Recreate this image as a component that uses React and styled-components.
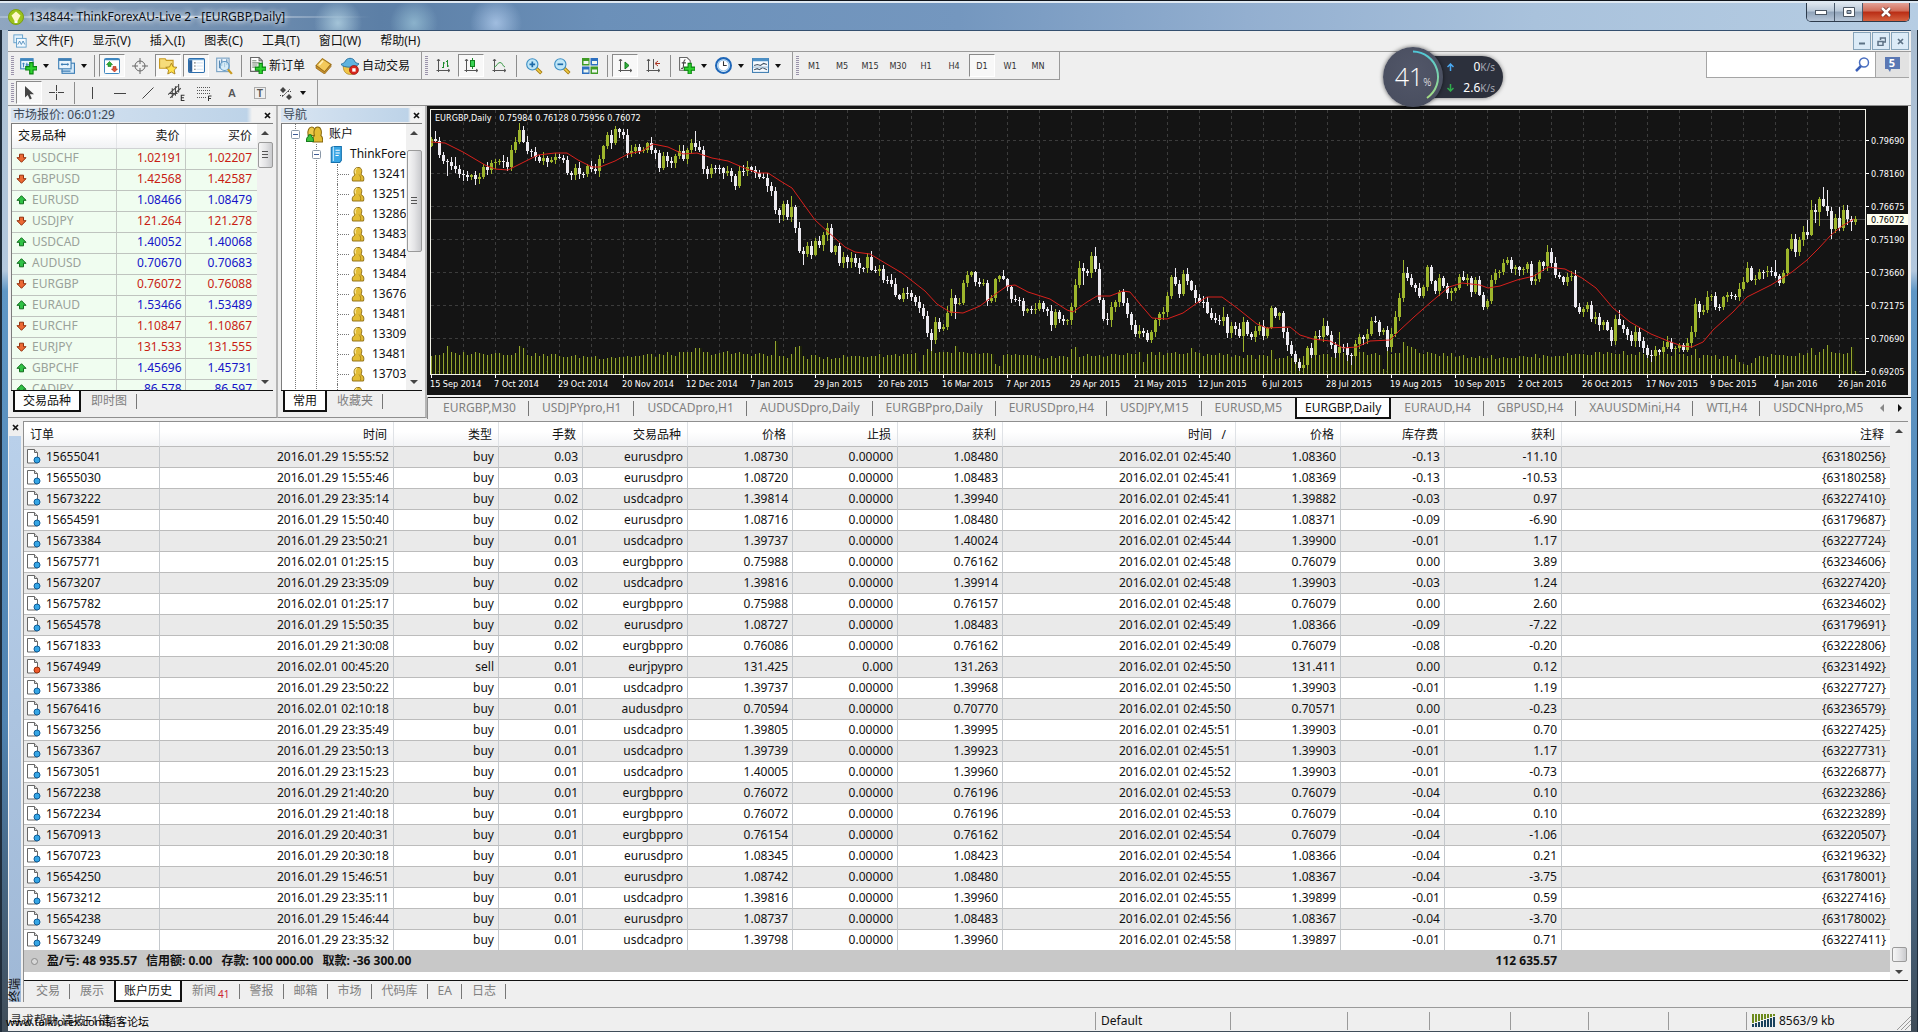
import React, { useState } from 'react';
import styled, { createGlobalStyle, css } from 'styled-components';

const GlobalStyle = createGlobalStyle`
    * {
        box-sizing: border-box;
    }
    body {
        margin: 0;
        font-family: "Noto Sans", "Noto Sans CJK SC", sans-serif;
        font-size: 12px;
        line-height: 16px;
        color: #111;
        background: #efefef;
    }
    button, input {
        font: inherit;
        color: inherit;
        margin: 0;
        padding: 0;
        border: 0;
        background: none;
        border-radius: 0;
    }
`;

/* ---------- window ---------- */

const Window = styled.div`
    position: relative;
    min-height: 100vh;
    display: flex;
    flex-direction: column;
    padding: 0 7px 1px 8px;
    border-top: 1px solid #10151c;
    background: linear-gradient(180deg, #a9bccf 0, #b3c8de 270px, #5f97c6 290px, #4f83b1 70%, #3f4c58 100%);
    box-shadow: inset 2px 0 0 #1f2c3a, inset -1px 0 0 #1f2c3a;
`;

const TitleBar = styled.header`
    display: flex;
    align-items: center;
    height: 29px;
    margin: 0 -7px 0 -8px;
    padding: 0 8px;
    border-top: 2px solid #dfe9f2;
    background:
        radial-gradient(circle at 338px 20px, rgba(180, 212, 228, .8), transparent 24px),
        radial-gradient(circle at 414px 20px, rgba(150, 190, 212, .8), transparent 24px),
        radial-gradient(circle at 496px 20px, rgba(175, 202, 235, .8), transparent 26px),
        radial-gradient(ellipse at 150px 14px, rgba(235, 240, 246, .85), rgba(220, 228, 238, .5) 130px, transparent 230px),
        linear-gradient(90deg, #8fa6c0 0, #5c7fa6 380px, #6b90b9 600px, #7497bf 50%, #93afd0 65%, #a9c2dc 80%, #b6cde3 100%);
`;

const TitleText = styled.h1`
    margin: 0 auto 0 5px;
    font-size: 12px;
    font-weight: 400;
    color: #0a0f16;
    text-shadow: 0 0 6px #fff, 0 0 6px #fff;
`;

const WindowButtons = styled.div`
    display: flex;
    align-self: flex-start;
    height: 19px;
    border: 1px solid #2d3b4c;
    border-top: 0;
    border-radius: 0 0 5px 5px;
    overflow: hidden;
`;

const WindowButton = styled.button`
    display: flex;
    align-items: center;
    justify-content: center;
    width: ${p => (p.$close ? 46 : 28)}px;
    border-right: ${p => (p.$close ? 0 : '1px solid #4a5a6c')};
    background: ${p => (p.$close
        ? 'linear-gradient(#e3a196 0, #d06c58 45%, #b92c14 50%, #d5613f 100%)'
        : 'linear-gradient(#dde6ef 0, #b9c8d8 45%, #8fa2b8 50%, #b6c6d8 100%)')};
`;

const Client = styled.main`
    flex: 1;
    display: flex;
    flex-direction: column;
    border-top: 1px solid #34506f;
    background: #efefef;
`;

/* ---------- menu and toolbars ---------- */

const MenuBar = styled.nav`
    display: flex;
    align-items: center;
    gap: 19px;
    height: 21px;
    padding: 0 2px 0 5px;
    border-bottom: 1px solid #9a9a9a;
`;

const MenuItems = styled.div`
    display: flex;
    gap: 19px;
    margin-left: -10px;
`;

const MdiButtons = styled.div`
    display: flex;
    gap: 1px;
    margin-left: auto;
`;

const MdiButton = styled.button`
    display: flex;
    align-items: center;
    justify-content: center;
    width: 18px;
    height: 18px;
    border: 1px solid #86a3b9;
    background: #dcebf7;
`;

const ToolRow = styled.div`
    display: flex;
    align-items: flex-start;
    height: ${p => p.$height}px;
`;

const ToolGroup = styled.div`
    display: flex;
    align-items: center;
    height: 28px;
    padding: 0 6px 0 3px;
    border-right: 1px solid #9a9a9a;
    border-bottom: ${p => (p.$last ? 0 : '1px solid #9a9a9a')};
    ${p => p.$last && css`height: 25px;`}
`;

const Grip = styled.span`
    width: 3px;
    height: 20px;
    margin-right: 2px;
    background: repeating-linear-gradient(#9b94ab 0 1px, #efefef 1px 2px);
`;

const ToolSep = styled.span`
    width: 1px;
    height: 22px;
    margin: 0 4px 0 2px;
    background: #8d8d8d;
`;

const ToolButton = styled.button`
    display: flex;
    align-items: center;
    justify-content: center;
    gap: 3px;
    height: 23px;
    min-width: 26px;
    margin-right: 2px;
    padding: 0 2px;
    border: 1px solid transparent;
    white-space: nowrap;
    ${p => p.$on && css`
        border-color: #8a8a8a #fff #fff #8a8a8a;
        background: #f8f8f8;
    `}
`;

const TimeButton = styled(ToolButton)`
    font-family: "DejaVu Sans Condensed", "DejaVu Sans", sans-serif;
    font-size: 9px;
    color: #333;
`;

const Caret = styled.span`
    margin-left: 3px;
    border: 3px solid transparent;
    border-top: 4px solid #111;
    border-bottom: 0;
`;

const SearchArea = styled.div`
    display: flex;
    margin-left: auto;
    margin-right: 2px;
    height: 26px;
    border-bottom: 1px solid #a5a5a5;
`;

const SearchBox = styled.label`
    display: flex;
    align-items: center;
    width: 170px;
    padding-right: 5px;
    background: #fff;
    border: 1px solid #a5a5a5;
    border-width: 0 1px;

    input {
        flex: 1;
        min-width: 0;
        height: 22px;
        padding: 0 6px;
        outline: 0;
    }
`;

const MessageButton = styled.button`
    display: flex;
    align-items: center;
    justify-content: center;
    width: 33px;
    background: #e2e2e2;
`;

/* ---------- network gauge floating over the toolbar ---------- */

const Gauge = styled.aside`
    position: absolute;
    top: 46px;
    right: 415px;
    display: flex;
    align-items: center;
    color: #fff;
`;

const GaugeDial = styled.div`
    position: relative;
    z-index: 1;
    display: flex;
    align-items: baseline;
    justify-content: center;
    width: 60px;
    height: 60px;
    border-radius: 50%;
    background: radial-gradient(circle at 50% 40%, #525769, #474c5d);
    box-shadow: 0 0 4px rgba(0, 0, 0, .6);
    font-family: "Open Sans", sans-serif;
    font-weight: 300;
    font-size: 25px;
    line-height: 58px;

    small {
        font-size: 10px;
    }
    svg {
        position: absolute;
        inset: 0;
    }
`;

const GaugeSpeeds = styled.div`
    width: 76px;
    height: 42px;
    margin-left: -16px;
    padding: 0 8px 0 20px;
    border-radius: 0 21px 21px 0;
    background: #2c303c;
    box-shadow: 0 0 4px rgba(0, 0, 0, .5);
`;

const Speed = styled.div`
    display: flex;
    align-items: center;
    height: 21px;

    span {
        margin-left: auto;
    }
    small {
        font-size: 10px;
        color: #a4a8b4;
    }
`;

/* ---------- docked panels ---------- */

const Upper = styled.section`
    display: grid;
    grid-template-columns: 270px 149px minmax(0, 1fr);
    height: 315px;
    border-top: 1px solid #8f8f8f;
`;

const Dock = styled.section`
    display: flex;
    flex-direction: column;
    min-width: 0;
    height: 312px;
    padding: 2px 3px 5px 3px;
    border-right: 2px solid #b5b5b5;
    border-bottom: 1px solid #8f8f8f;
`;

const DockHead = styled.header`
    display: flex;
    align-items: center;
    justify-content: space-between;
    height: 14px;
    margin-bottom: 1px;
    padding: 0 2px;
    color: #3b4856;
    background: linear-gradient(90deg, #d9e5f2, #bdd3e8 90%, #f2f2f2 92%);

    h2 {
        margin: 0;
        font-size: 12px;
        line-height: 14px;
        font-weight: 400;
    }
`;

const CloseMark = styled.button`
    display: flex;
    align-items: center;
    justify-content: center;
    width: 8px;
    height: 12px;
`;

const DockBody = styled.div`
    flex: 1;
    display: flex;
    min-height: 0;
    overflow: hidden;
    border: 1px solid #7d7d7d;
    border-width: 1px 0 0 1px;
    background: #fff;
`;

const Scroll = styled.div`
    display: flex;
    flex-direction: column;
    align-items: center;
    width: ${p => p.$width || 16}px;
    flex: none;
    padding: 7px 0 6px;
    background: #f0f0f0;
`;

const Thumb = styled.div`
    width: 15px;
    height: ${p => p.$height}px;
    margin-top: ${p => p.$top}px;
    margin-bottom: auto;
    border: 1px solid #9a9a9a;
    border-radius: 2px;
    display: flex;
    flex-direction: column;
    align-items: center;
    justify-content: center;
    background: linear-gradient(90deg, #f6f6f6, #e4e4e6 50%, #c9cacd);

    &::before {
        content: "";
        width: 6px;
        height: ${p => (p.$grip ? 8 : 0)}px;
        background: repeating-linear-gradient(#555 0 1px, transparent 1px 3px);
    }
`;

const ScrollArrow = styled.span`
    border: 4px solid transparent;
    ${p => (p.$down
        ? css`border-top: 4px solid #444; border-bottom: 0;`
        : css`border-bottom: 4px solid #444; border-top: 0;`)}
`;

const QuoteTable = styled.table`
    flex: 1;
    align-self: flex-start;
    table-layout: fixed;
    border-collapse: collapse;

    th {
        height: 24px;
        padding: 0 5px 0 6px;
        border-right: 1px solid #e2e4e6;
        border-bottom: 1px solid #d0d2d4;
        background: linear-gradient(#fff 40%, #f1f2f4);
        font-weight: 400;
        text-align: right;
    }
    td {
        height: 21px;
        padding: 0 3px 2px 4px;
        border-right: 1px solid #c3c8c3;
        border-bottom: 1px solid #bfc4bf;
        background: #f0fdf0;
        text-align: right;
        line-height: 16px;
    }
    th:first-child, td:first-child {
        text-align: left;
    }
    th:last-child, td:last-child {
        border-right: 0;
        padding-right: 5px;
    }
`;

const Symbol = styled.span`
    display: flex;
    align-items: center;
    gap: 5px;
    color: #9aa29a;
`;

const Price = styled.span`
    color: ${p => (p.$up ? '#1414c8' : '#c81e14')};
`;

const TabStrip = styled.div`
    display: flex;
    height: ${p => p.$height || 22}px;
    padding-left: ${p => p.$pad || 0}px;
    border-top: 1px solid #111;
    white-space: nowrap;
    overflow: hidden;
`;

const Tab = styled.button`
    position: relative;
    display: flex;
    align-items: center;
    flex: none;
    height: 21px;
    padding: 0 ${p => (p.$loose ? 13 : 10)}px 1px;
    color: #808080;

    &::after {
        content: "";
        position: absolute;
        right: 0;
        top: 3px;
        width: 1px;
        height: 15px;
        background: #777;
    }
    ${p => p.$beforeActive && css`
        &::after { display: none; }
    `}
    ${p => p.$active && css`
        padding: 0 8px;
        border: 1px solid #111;
        border-width: 0 2px 2px;
        background: #fff;
        color: #111;
        &::after { display: none; }
    `}
    sub {
        margin: 6px 0 0 2px;
        font-size: 10px;
        line-height: 10px;
        color: #cc2233;
    }
`;

const Tree = styled.ul`
    flex: 1;
    min-width: 0;
    margin: 0;
    padding: 0;
    list-style: none;
    overflow: hidden;
`;

const TreeRow = styled.li`
    display: flex;
    align-items: center;
    height: 20px;
    white-space: nowrap;
    padding-left: ${p => p.$pad}px;
    gap: 6px;
    background-image:
        linear-gradient(transparent 50%, #fff 50%),
        linear-gradient(90deg, #777 1px, transparent 1px),
        linear-gradient(transparent 50%, #fff 50%),
        linear-gradient(90deg, #777 1px, transparent 1px);
    background-size: 1px 2px, 1px 20px, 1px 2px, 1px 20px;
    background-repeat: repeat-y;
    background-position: 13px 0, 13px 0, ${p => (p.$level > 0 ? '34px 0, 34px 0' : '-9px 0, -9px 0')};
`;

const Branch = styled.span`
    width: 12px;
    height: 20px;
    margin-right: -5px;
    flex: none;
    border-left: 1px dotted #777;
    background: repeating-linear-gradient(90deg, #777 0 1px, transparent 1px 2px) 0 50% / 12px 1px no-repeat;
`;

const ChartPanel = styled.section`
    display: flex;
    flex-direction: column;
    min-width: 0;
`;

const ChartSvg = styled.svg`
    display: block;
    width: calc(100% - 3px);
    height: 289px;
    background: #141414;
    font-family: "DejaVu Sans Condensed", "DejaVu Sans", sans-serif;
    font-size: 9px;
    fill: #fff;
`;

const ChartTabs = styled.div`
    display: flex;
    align-items: stretch;
    margin-top: 2px;
    border-left: 1px solid #8f8f8f;

    > div:first-child {
        flex: 1;
        min-width: 0;
    }
`;

const ChartTabArrows = styled.div`
    display: flex;
    align-items: center;
    gap: 14px;
    padding: 0 8px 2px;
    border-top: 1px solid #111;
`;

/* ---------- terminal ---------- */

const Terminal = styled.section`
    display: grid;
    grid-template-columns: 15px minmax(0, 1fr);
    padding: 1px 3px 5px 0;
    border-bottom: 1px solid #9a9a9a;
`;

const TerminalSide = styled.div`
    display: flex;
    flex-direction: column;
    align-items: center;
    padding: 0 2px 0 1px;
`;

const TerminalLabel = styled.h2`
    flex: 1;
    display: flex;
    align-items: center;
    width: 12px;
    margin: 3px 0 0;
    writing-mode: vertical-rl;
    text-orientation: sideways;
    transform: rotate(180deg);
    font-size: 12px;
    line-height: 12px;
    font-weight: 400;
    background: linear-gradient(#9fb8d6, #b9d0ea);
`;

const TerminalMain = styled.div`
    border-left: 1px solid #8f8f8f;
    border-top: 1px solid #8f8f8f;
    min-width: 0;
`;

const OrderArea = styled.div`
    display: flex;
    background: #fff;
`;

const OrderTable = styled.table`
    flex: 1;
    align-self: flex-start;
    table-layout: fixed;
    border-collapse: separate;
    border-spacing: 0;
    margin-bottom: 8px;

    th {
        height: 25px;
        padding: 1px 6px 0;
        border-right: 1px solid #dfe2e6;
        border-bottom: 1px solid #bcbcbc;
        background: linear-gradient(#fff 40%, #f2f3f5);
        font-weight: 400;
        text-align: right;
    }
    td {
        height: 21px;
        padding: 0 4px 1px 3px;
        border-right: 1px solid #c4c8cc;
        border-bottom: 1px solid #bcbcbc;
        text-align: right;
        white-space: nowrap;
    }
    tbody tr:nth-child(odd) td {
        background: #eaeaea;
    }
    th:first-child, td:first-child {
        text-align: left;
    }
    tbody tr:last-child td {
        border-bottom-color: #c8c8c8;
    }
    tfoot td {
        border: 0;
        background: #c8c8c8;
        font-weight: 700;
        padding-right: 5px;
    }
    th:last-child, td:last-child {
        border-right: 0;
    }
`;

const OrderId = styled.span`
    display: flex;
    align-items: center;
    gap: 5px;
`;

const Totals = styled.span`
    display: flex;
    align-items: center;
    gap: 9px;

    i {
        width: 7px;
        height: 7px;
        margin: 0 0 0 4px;
        border: 1px solid #8a8a8a;
        border-radius: 50%;
        background: #d8d8d8;
    }
`;

const StatusBar = styled.footer`
    position: relative;
    display: flex;
    flex: 1;
    align-items: center;
    min-height: 22px;
    padding-top: 2px;
`;

const StatusCell = styled.div`
    display: flex;
    align-items: center;
    gap: 4px;
    height: 18px;
    padding-left: 5px;
    border-left: 1px solid #9a9a9a;
    width: ${p => p.$width}px;
`;

const HelpText = styled.div`
    flex: 1;
    padding-left: 2px;
    color: #333;
`;

const SiteMark = styled.a`
    position: absolute;
    left: -2px;
    top: 6px;
    font-size: 11px;
    line-height: 16px;
    color: #000;
    text-decoration: none;
    white-space: nowrap;
`;

/* ---------- icons ---------- */

const Icon = ({ size = 16, children }) => (
    <svg width={size} height={size} viewBox="0 0 16 16" fill="none" aria-hidden="true" style={{ flex: 'none' }}>{children}</svg>
);

const Plus = ({ x = 6, y = 6 }) => (
    <path transform={`translate(${x} ${y})`} d="M3.500 0h3v3.500h3.500v3h-3.500V10h-3V6.500H0v-3h3.500z" fill="#2fd32f" stroke="#0a8410" />
);

const Axes = ({ children }) => (
    <Icon>
        <path d="M3.500 1.500v12.500M2 3l1.500-2L5 3M1.500 12.500h13M13 11l2 1.500-2 1.500" stroke="#555" />
        {children}
    </Icon>
);

const Lens = ({ mark }) => (
    <Icon size={18}>
        <path d="M10 10l4.500 4.500" stroke="#a67c10" strokeWidth="3" />
        <path d="M10 10l4 4" stroke="#f2cf4a" strokeWidth="1.500" />
        <circle cx="6.500" cy="6.500" r="5" fill="#bfe6f7" stroke="#3d8fc4" />
        <path d={mark} stroke="#1d6aa8" strokeWidth="1.500" />
    </Icon>
);

const icons = {
    newChart: (
        <Icon size={18}>
            <rect x="1.500" y="1.500" width="11" height="9" fill="#eaf5fd" stroke="#3f86bd" />
            <path d="M1.500 2.500h11" stroke="#3f86bd" strokeWidth="2" />
            <path d="M4 5v4M3 6h2M7 5v3M6 7h3" stroke="#3f86bd" />
            <Plus x={6} y={5} />
        </Icon>
    ),
    profiles: (
        <Icon size={18}>
            <rect x="4.500" y="5.500" width="11" height="9" fill="#d5eafa" stroke="#3f7fb5" />
            <rect x="1.500" y="1.500" width="11" height="9" fill="#eaf5fd" stroke="#3f7fb5" />
            <path d="M1.500 2.500h11" stroke="#3f7fb5" strokeWidth="2" />
            <path d="M3.500 6.500h7M4.500 5.500v2M9.500 5.500v2M4 12.500h8" stroke="#3f7fb5" />
        </Icon>
    ),
    market: (
        <Icon>
            <rect x=".5" y=".5" width="15" height="15" rx="1" fill="#fff" stroke="#3e87c0" />
            <path d="M.5 1.500h15" stroke="#3e87c0" strokeWidth="1.500" />
            <path d="M5.500 3.500l3 3h-1.500v2h-3v-2H2.500z" fill="#2fae36" stroke="#137a1a" strokeWidth=".6" />
            <path d="M10.500 14l3-3H12V8.500H9V11H7.500z" fill="#e0563a" stroke="#a92a12" strokeWidth=".6" />
        </Icon>
    ),
    target: (
        <Icon>
            <circle cx="8" cy="8" r="5" stroke="#666" />
            <path d="M8 0v6M8 10v6M0 8h6M10 8h6" stroke="#666" />
        </Icon>
    ),
    navigator: (
        <Icon size={18}>
            <path d="M.5 1.500h5l1 1.500h6v7H.5z" fill="#f6dc7a" stroke="#c79a22" />
            <path d="M11 5.500l1.600 3.300 3.400.4-2.500 2.400.7 3.500-3.200-1.700-3.200 1.700.7-3.500L6 9.200l3.400-.4z" fill="#ffe14a" stroke="#a8801a" strokeWidth=".8" />
        </Icon>
    ),
    terminal: (
        <Icon size={17}>
            <rect x=".5" y="1.500" width="15" height="13" rx="1" fill="#fff" stroke="#2d6fae" />
            <path d="M1 2.500h14" stroke="#5b9cd2" />
            <path d="M2.500 3v11" stroke="#2b5f98" strokeWidth="3" />
            <path d="M6 5.500h1M6 8.500h1M6 11.500h1" stroke="#333" />
            <path d="M8 5.500h6M8 8.500h6M8 11.500h6" stroke="#d6e4f2" />
        </Icon>
    ),
    tester: (
        <Icon size={18}>
            <rect x="1.500" y="1" width="11" height="12" fill="#eaf3fb" stroke="#7aa2c4" />
            <path d="M4 3v7M6 2v6M8.500 5v4M10.500 2v5" stroke="#5686ae" />
            <circle cx="8.500" cy="8" r="4" fill="#cfe9f7" fillOpacity=".7" stroke="#5d97c4" />
            <path d="M11.500 11l3.500 4" stroke="#c99a1f" strokeWidth="2" />
        </Icon>
    ),
    order: (
        <Icon size={17}>
            <path d="M1.500.5h8l3 3v10h-11z" fill="#fff" stroke="#666" />
            <path d="M9.500.5v3h3" stroke="#666" />
            <path d="M3 3.500h4M3 5.500h7M3 7.500h5M3 9.500h3" stroke="#7a8a7a" />
            <Plus x={6} y={6} />
        </Icon>
    ),
    book: (
        <Icon size={17}>
            <path d="M1 8l6-6.500 8 5.500-6 7z" fill="#f3c95b" stroke="#a3771a" />
            <path d="M1 8v2.500L9 16l6-7V7l-6 7z" fill="#c8922a" stroke="#94671a" strokeWidth=".7" />
            <path d="M4 7.500l3.500-4" stroke="#fff0b8" strokeWidth="1.500" />
        </Icon>
    ),
    expert: (
        <Icon size={18}>
            <path d="M2 8c0 6 3.500 7.500 6.500 7.500S14 13 14 8z" fill="#f0c648" stroke="#ac8321" strokeWidth=".7" />
            <path d="M0 6.500C2 5.500 3.500 5 4 3.500 5 .5 11 .3 12 3.500c.4 1.500 2 2 4 2.500-2 4-14 4-16 .5z" fill="#5fb3df" stroke="#256e9e" strokeWidth=".8" />
            <circle cx="11.500" cy="11.500" r="4" fill="#d8261c" stroke="#8f140e" strokeWidth=".6" />
            <rect x="10" y="10" width="3" height="3" fill="#fff" />
        </Icon>
    ),
    bars: <Axes><path d="M7 9.500h1.500V4M8.500 5H10M8.500 9v1M12.500 2v7M11 3.500h1.500M12.500 8H14" stroke="#1c8a2b" /></Axes>,
    candles: <Axes><path d="M9.500 0v11" stroke="#1c8a2b" /><rect x="7.500" y="2.500" width="4" height="6" fill="#39d353" stroke="#12801f" /></Axes>,
    line: <Axes><path d="M3 9c3 0 3-4.500 6-4.500S11 8 14 9" stroke="#3c9a48" /></Axes>,
    zoomIn: <Lens mark="M6.500 4v5M4 6.500h5" />,
    zoomOut: <Lens mark="M4 6.500h5" />,
    tile: (
        <Icon>
            <rect x="0" y="0" width="7.500" height="7.500" fill="#3f9b26" />
            <rect x="8.500" y="0" width="7.500" height="7.500" fill="#2c6fc0" />
            <rect x="0" y="8.500" width="7.500" height="7.500" fill="#2c6fc0" />
            <rect x="8.500" y="8.500" width="7.500" height="7.500" fill="#3f9b26" />
            <path d="M1.500 3h5v3h-5zM10 3h5v3h-5zM1.500 11.500h5v3h-5zM10 11.500h5v3h-5z" fill="#eef6ee" />
        </Icon>
    ),
    scroll: <Axes><path d="M8 4l4 3.500L8 11z" fill="#2fb13b" stroke="#147a1f" /></Axes>,
    shift: <Axes><path d="M8.500 1v10" stroke="#555" /><path d="M15 5.500h-4M13 3l-3 2.500L13 8" stroke="#a9321f" /></Axes>,
    indicators: (
        <Icon size={17}>
            <path d="M1.500.5h7l3 3v9h-10z" fill="#fff" stroke="#666" />
            <path d="M7 2.500c-2 0-1.500 2-2 7-.1 1-1 1.500-2 1M3.500 5.500h4" stroke="#444" />
            <Plus x={6} y={6} />
        </Icon>
    ),
    clock: (
        <Icon size={17}>
            <circle cx="8" cy="8" r="7" fill="#fff" stroke="#1e66b8" strokeWidth="2" />
            <circle cx="8" cy="8" r="5.200" stroke="#8fc0ea" />
            <path d="M8 4v4h3" stroke="#333" />
        </Icon>
    ),
    template: (
        <Icon size={17}>
            <rect x=".5" y="1.500" width="15" height="13" fill="#f7fbff" stroke="#3d7cb0" />
            <path d="M.5 2.500h15" stroke="#4d90c6" strokeWidth="3" />
            <path d="M2 8l3-1 3 1 3-2 3 1M2 12l3-1 2 1 3-2 4 2" stroke="#456" />
            <path d="M1 9.500h14" stroke="#9bb9d0" />
        </Icon>
    ),
    cursor: <Icon><path d="M4 1v11.500l2.800-2.500 2 4.500 2-1-2-4.300H13z" fill="#444" /></Icon>,
    cross: <Icon><path d="M7.500 0v6M7.500 9v6M0 7.500h6M9 7.500h6M7 7.500h1" stroke="#444" /></Icon>,
    vline: <Icon><path d="M8.500 2v12" stroke="#444" /></Icon>,
    hline: <Icon><path d="M2 8.500h12" stroke="#444" /></Icon>,
    trend: <Icon><path d="M2.500 13.500l11-11" stroke="#444" /></Icon>,
    channel: (
        <Icon size={17}>
            <path d="M0 10l9-8M2 13l10-9M4 4v9M7 2v9M10 0v8M1 9h8" stroke="#444" />
            <path d="M15.500 10.500h-3v5h3M12.500 13h2.500" stroke="#333" />
        </Icon>
    ),
    fibo: (
        <Icon>
            <path d="M1 2.500h14M1 5.500h14M1 8.500h14M1 12.500h9" stroke="#555" strokeDasharray="1 1" />
            <path d="M12.500 16v-5h3M12.500 13.500h2.500" stroke="#333" />
        </Icon>
    ),
    arrows: (
        <Icon>
            <path d="M5 2l3 3-3 3-3-3zM11 9l3 3-3 3-3-3z" fill="#444" />
            <path d="M2 10.500h3.500M13 6.500H9.500" stroke="#444" strokeDasharray="1 1" />
            <path d="M4 12l8-8" stroke="#777" />
        </Icon>
    ),
};

const Arrow = ({ up }) => (
    <svg width="11" height="10" viewBox="0 0 11 10" aria-hidden="true">
        {up
            ? <path d="M5.500.7l4.500 4.600H7.500v3.500h-4V5.300H1z" fill="#2fc245" stroke="#116b1c" />
            : <path d="M5.500 9.300L1 4.700h2.500V1.200h4v3.500H10z" fill="#ec6a34" stroke="#93300e" />}
    </svg>
);

const Person = () => (
    <Icon>
        <path d="M2.500 15c-1-3 .5-5 2.500-6-1.500-2-1.500-7 2.500-7.500C12 1 12.500 5 11 8.500c2.500 1 3.500 3.500 2.500 6.500z" fill="#e3bd34" stroke="#94741a" />
        <path d="M7 2.500c-2 .5-2.200 3-1.500 5" stroke="#fff3b0" />
        <path d="M9 8.500c1.500 1.500 2 3.500 1.500 6" stroke="#a8841c" />
    </Icon>
);

const People = () => (
    <Icon size={17}>
        <path d="M2 9c-1-5 1-8 3.500-8S9 4 8.500 9z" fill="#ecc94a" stroke="#8a6a10" />
        <path d="M6.500 15c-1-3 .3-5 1.500-6-1-3-.5-8 3-8s4 5 3 8c1.500 1 2 3 1.500 6z" fill="#e3bd34" stroke="#8a6a10" />
        <path d="M.5 14.500c-.3-3 .5-4 1.500-4.500 0-2.500 3.500-2.500 3.500 0 1 .5 1.800 1.500 1.500 4.500z" fill="#3ec43e" stroke="#1a7a1f" />
    </Icon>
);

const Server = () => (
    <Icon size={17}>
        <path d="M4 1.500L6 .5h7.500v13L12 15.500H4z" fill="#39a7e6" stroke="#1671ad" />
        <path d="M6 .5v13.500" stroke="#bfe6fb" />
        <path d="M8 4h4M8 6.500h4M8 9h3" stroke="#fff" />
    </Icon>
);

const Expander = () => (
    <svg width="9" height="9" aria-hidden="true" style={{ flex: 'none' }}>
        <rect x=".5" y=".5" width="8" height="8" rx="1" fill="#fff" stroke="#8a98a8" />
        <path d="M2 4.500h5" stroke="#3c5a96" />
    </svg>
);

const Sheet = ({ sell }) => (
    <svg width="14" height="15" viewBox="0 0 14 15" aria-hidden="true">
        <path d="M.5.5h7l3 3v10.500H.5z" fill="#fff" stroke="#666" />
        <path d="M7.500.5v3h3" fill="#ddd" stroke="#666" />
        <circle cx="10" cy="11" r="3" fill={sell ? '#f0592a' : '#35a6e6'} stroke={sell ? '#96300c' : '#0f5c96'} />
    </svg>
);

const Cross = ({ color = '#111' }) => (
    <svg width="7" height="7" aria-hidden="true"><path d="M1 1l5 5M6 1L1 6" stroke={color} strokeWidth="1.700" /></svg>
);

/* ---------- price chart ---------- */

// vertical positions of the closing prices, one per daily bar, three units to a pixel
const CLOSES = [
    118, 123, 166, 183, 186, 198, 208, 221, 225, 231, 226, 238, 232, 200, 209, 188, 186, 184, 186, 201,
    150, 127, 90, 127, 152, 156, 172, 182, 175, 186, 179, 170, 175, 181, 218, 224, 204, 223, 222, 197,
    206, 212, 176, 138, 105, 130, 87, 97, 106, 159, 154, 142, 154, 151, 128, 150, 158, 204, 168, 184,
    188, 168, 153, 176, 150, 130, 141, 151, 207, 221, 204, 203, 205, 218, 212, 227, 259, 214, 213, 200,
    211, 220, 230, 235, 258, 274, 330, 345, 312, 350, 320, 385, 453, 461, 438, 465, 423, 434, 405, 384,
    455, 438, 488, 470, 486, 475, 490, 503, 505, 472, 510, 514, 507, 540, 539, 553, 584, 598, 580, 579,
    592, 605, 625, 647, 700, 720, 667, 687, 680, 640, 595, 613, 608, 548, 525, 517, 545, 553, 550, 603,
    593, 536, 528, 537, 562, 598, 601, 603, 632, 627, 629, 627, 610, 628, 634, 675, 637, 658, 663, 660,
    622, 555, 505, 512, 520, 467, 508, 600, 658, 659, 622, 605, 576, 610, 643, 674, 701, 692, 698, 719,
    697, 660, 643, 636, 587, 530, 552, 582, 522, 543, 570, 594, 607, 606, 640, 655, 660, 662, 652, 700,
    677, 688, 708, 667, 703, 710, 693, 677, 708, 683, 623, 648, 640, 695, 735, 763, 785, 803, 795, 745,
    765, 708, 710, 677, 705, 735, 760, 741, 745, 765, 768, 733, 710, 718, 702, 662, 665, 697, 690, 740,
    702, 652, 595, 520, 535, 555, 565, 588, 560, 500, 543, 573, 533, 558, 580, 572, 565, 530, 540, 535,
    575, 540, 585, 620, 603, 540, 520, 515, 490, 480, 508, 500, 510, 507, 493, 542, 538, 487, 497, 457,
    490, 525, 530, 547, 530, 528, 620, 635, 627, 615, 658, 650, 675, 667, 690, 723, 657, 675, 688, 705,
    722, 697, 722, 745, 765, 768, 750, 757, 742, 725, 748, 745, 735, 750, 728, 697, 612, 635, 630, 592,
    588, 620, 622, 590, 585, 587, 592, 567, 545, 505, 540, 538, 517, 517, 513, 517, 527, 550, 520, 447,
    418, 455, 420, 397, 405, 330, 335, 297, 317, 333, 387, 353, 385, 330, 357, 367, 357,
];

// bars whose wicks reach well past the body
const HIGHS = {
    1: 93, 6: 172, 22: 68, 46: 78, 66: 92, 79: 184, 90: 288, 99: 370, 129: 618, 130: 568, 134: 513, 160: 610,
    161: 538, 162: 483, 166: 440, 186: 503, 189: 503, 198: 620, 223: 655, 227: 697, 243: 480, 279: 435,
    297: 630, 336: 480, 344: 360, 345: 300, 347: 290, 348: 262, 349: 270, 352: 320,
};
const LOWS = {
    4: 228, 8: 242, 11: 254, 42: 232, 87: 368, 93: 494, 125: 753, 131: 658, 163: 555, 170: 680, 203: 755,
    230: 795, 255: 602, 297: 675, 346: 370, 347: 378, 350: 417, 355: 392,
};

const AVERAGE = [
    [431, 127], [445, 130], [463, 155], [485, 195], [495, 208], [508, 210], [522, 190], [538, 166], [555, 160],
    [567, 160], [578, 180], [592, 200], [600, 202], [615, 183], [628, 162], [642, 152], [653, 133], [668, 142],
    [683, 163], [697, 160], [712, 173], [728, 182], [742, 200], [758, 218], [768, 220], [782, 247], [792, 265],
    [802, 305], [815, 360], [828, 395], [845, 440], [855, 455], [870, 462], [885, 490], [902, 520], [925, 573],
    [937, 612], [950, 637], [963, 640], [980, 617], [997, 580], [1007, 558], [1015, 555], [1028, 575],
    [1050, 598], [1067, 630], [1073, 635], [1087, 605], [1097, 588], [1110, 588], [1123, 573], [1130, 577],
    [1140, 612], [1152, 655], [1167, 657], [1183, 640], [1197, 608], [1207, 592], [1222, 592], [1237, 625],
    [1257, 672], [1267, 683], [1290, 682], [1300, 705], [1313, 718], [1330, 722], [1343, 745], [1357, 742],
    [1370, 723], [1390, 720], [1400, 690], [1414, 650], [1431, 605], [1449, 560], [1462, 550], [1480, 555],
    [1488, 565], [1500, 557], [1517, 540], [1534, 527], [1548, 502], [1565, 507], [1582, 533], [1596, 565],
    [1613, 625], [1630, 665], [1651, 702], [1668, 722], [1682, 737], [1692, 742], [1703, 725], [1713, 690],
    [1733, 635], [1747, 590], [1771, 555], [1792, 515], [1807, 480], [1819, 445], [1831, 405], [1842, 378], [1854, 357],
];

const BUSY_BARS = {
    4: 28, 22: 28, 23: 26, 66: 26, 67: 26, 86: 33, 91: 27, 92: 28, 124: 25, 125: 26, 131: 28, 160: 25, 161: 27,
    190: 26, 210: 24, 243: 32, 244: 28, 245: 27, 246: 25, 249: 22, 316: 25, 345: 26, 348: 25, 349: 29, 355: 27,
    141: 10, 142: 8, 178: 12, 327: 12, 328: 10, 329: 9, 330: 11, 356: 3, 238: 5, 122: 2,
};

const DATES = [
    '15 Sep 2014', '7 Oct 2014', '29 Oct 2014', '20 Nov 2014', '12 Dec 2014', '7 Jan 2015', '29 Jan 2015',
    '20 Feb 2015', '16 Mar 2015', '7 Apr 2015', '29 Apr 2015', '21 May 2015', '12 Jun 2015', '6 Jul 2015',
    '28 Jul 2015', '19 Aug 2015', '10 Sep 2015', '2 Oct 2015', '26 Oct 2015', '17 Nov 2015', '9 Dec 2015',
    '4 Jan 2016', '26 Jan 2016',
];

const PRICES = ['0.79690', '0.78160', '0.76675', '0.75190', '0.73660', '0.72175', '0.70690', '0.69205'];

const toY = v => 100 + Math.round(v / 3);
const noise = (i, k) => {
    const n = Math.sin(i * 12.9898 + k * 78.233) * 43758.5453;
    return n - Math.floor(n);
};

const Candle = ({ index }) => {
    const x = 431 + index * 4;
    const open = toY(index ? CLOSES[index - 1] : 137);
    const close = toY(CLOSES[index]);
    const top = Math.min(open, close);
    const height = Math.max(Math.abs(open - close), 1);
    const color = close < open ? '#9db52c' : '#eceaf0';
    const high = HIGHS[index] ? toY(HIGHS[index]) : top - 1 - Math.round(noise(index, 1) * 5);
    const low = LOWS[index] ? toY(LOWS[index]) : top + height + 1 + Math.round(noise(index, 2) * 5);
    return (
        <g fill={color}>
            <rect x={x} y={high} width="1" height={low - high} />
            <rect x={x - 1} y={top} width="3" height={height} />
        </g>
    );
};

const PriceChart = () => (
    <ChartSvg viewBox="427 106 1481 289" preserveAspectRatio="xMinYMin meet" role="img" aria-label="EURGBP,Daily" shapeRendering="crispEdges">
        <g stroke="#3c3c3c" strokeDasharray="3 3">
            {PRICES.map((p, i) => <path key={p} d={`M431 ${140.5 + i * 33}H1865`} />)}
            {Array.from({ length: 44 }, (_, i) => <path key={i} d={`M${463.5 + i * 32} 110V374`} />)}
        </g>
        <path d="M431 219.500H1865" stroke="#4a4a4a" />
        {CLOSES.map((_, i) => {
            const h = BUSY_BARS[i] || 17 + Math.round(noise(i, 3) * 4 + Math.sin(i / 9) * 2);
            return (
                <g key={i}>
                    <rect x={431 + i * 4} y={374 - h} width="3" height={h} fill="#1a1e08" />
                    <rect x={431 + i * 4} y={374 - h} width="1" height={h} fill="#93a52f" />
                </g>
            );
        })}
        {CLOSES.map((_, i) => <Candle key={i} index={i} />)}
        <polyline
            points={AVERAGE.map(([x, y]) => `${x},${toY(y)}`).join(' ')}
            fill="none"
            stroke="#d8201c"
            shapeRendering="auto"
        />
        <path d="M430.500 374.500V109.500H1865.500V374.500Z" fill="none" stroke="#f4f4ea" />
        <text x="435" y="121">EURGBP,Daily&#160;&#160; 0.75984 0.76128 0.75956 0.76072</text>
        {DATES.map((d, i) => (
            <g key={d}>
                <rect x={431 + i * 64} y="375" width="1" height="3" />
                <text x={430 + i * 64} y="387">{d}</text>
            </g>
        ))}
        {PRICES.map((p, i) => (
            <g key={p}>
                <rect x="1866" y={140 + i * 33} width="3" height="1" />
                <text x="1871" y={144 + i * 33}>{p}</text>
            </g>
        ))}
        <rect x="1867" y="214" width="41" height="11" fill="#fffff0" />
        <text x="1871" y="223" fill="#000">0.76072</text>
    </ChartSvg>
);

/* ---------- data ---------- */

const MENUS = ['文件(F)', '显示(V)', '插入(I)', '图表(C)', '工具(T)', '窗口(W)', '帮助(H)'];
const TIMEFRAMES = ['M1', 'M5', 'M15', 'M30', 'H1', 'H4', 'D1', 'W1', 'MN'];

const QUOTES = [
    ['USDCHF', '1.02191', '1.02207', false],
    ['GBPUSD', '1.42568', '1.42587', false],
    ['EURUSD', '1.08466', '1.08479', true],
    ['USDJPY', '121.264', '121.278', false],
    ['USDCAD', '1.40052', '1.40068', true],
    ['AUDUSD', '0.70670', '0.70683', true],
    ['EURGBP', '0.76072', '0.76088', false],
    ['EURAUD', '1.53466', '1.53489', true],
    ['EURCHF', '1.10847', '1.10867', false],
    ['EURJPY', '131.533', '131.555', false],
    ['GBPCHF', '1.45696', '1.45731', true],
    ['CADJPY', '86.578', '86.597', true],
];

const ACCOUNTS = ['13241', '13251', '13286', '13483', '13484', '13484', '13676', '13481', '13309', '13481', '13703', ''];

const CHART_TABS = [
    'EURGBP,M30', 'USDJPYpro,H1', 'USDCADpro,H1', 'AUDUSDpro,Daily', 'EURGBPpro,Daily', 'EURUSDpro,H4',
    'USDJPY,M15', 'EURUSD,M5', 'EURGBP,Daily', 'EURAUD,H4', 'GBPUSD,H4', 'XAUUSDMini,H4', 'WTI,H4', 'USDCNHpro,M5',
];

const COLUMNS = [
    ['订单', 136], ['时间', 234], ['类型', 105], ['手数', 84], ['交易品种', 105], ['价格', 105], ['止损', 105],
    ['获利', 105], ['时间', 233], ['价格', 105], ['库存费', 104], ['获利', 117], ['注释', null],
];

const ORDERS = `15655041|2016.01.29 15:55:52|buy|0.03|eurusdpro|1.08730|0.00000|1.08480|2016.02.01 02:45:40|1.08360|-0.13|-11.10|{63180256}
15655030|2016.01.29 15:55:46|buy|0.03|eurusdpro|1.08720|0.00000|1.08483|2016.02.01 02:45:41|1.08369|-0.13|-10.53|{63180258}
15673222|2016.01.29 23:35:14|buy|0.02|usdcadpro|1.39814|0.00000|1.39940|2016.02.01 02:45:41|1.39882|-0.03|0.97|{63227410}
15654591|2016.01.29 15:50:40|buy|0.02|eurusdpro|1.08716|0.00000|1.08480|2016.02.01 02:45:42|1.08371|-0.09|-6.90|{63179687}
15673384|2016.01.29 23:50:21|buy|0.01|usdcadpro|1.39737|0.00000|1.40024|2016.02.01 02:45:44|1.39900|-0.01|1.17|{63227724}
15675771|2016.02.01 01:25:15|buy|0.03|eurgbppro|0.75988|0.00000|0.76162|2016.02.01 02:45:48|0.76079|0.00|3.89|{63234606}
15673207|2016.01.29 23:35:09|buy|0.02|usdcadpro|1.39816|0.00000|1.39914|2016.02.01 02:45:48|1.39903|-0.03|1.24|{63227420}
15675782|2016.02.01 01:25:17|buy|0.02|eurgbppro|0.75988|0.00000|0.76157|2016.02.01 02:45:48|0.76079|0.00|2.60|{63234602}
15654578|2016.01.29 15:50:35|buy|0.02|eurusdpro|1.08727|0.00000|1.08483|2016.02.01 02:45:49|1.08366|-0.09|-7.22|{63179691}
15671833|2016.01.29 21:30:08|buy|0.02|eurgbppro|0.76086|0.00000|0.76162|2016.02.01 02:45:49|0.76079|-0.08|-0.20|{63222806}
15674949|2016.02.01 00:45:20|sell|0.01|eurjpypro|131.425|0.000|131.263|2016.02.01 02:45:50|131.411|0.00|0.12|{63231492}
15673386|2016.01.29 23:50:22|buy|0.01|usdcadpro|1.39737|0.00000|1.39968|2016.02.01 02:45:50|1.39903|-0.01|1.19|{63227727}
15676416|2016.02.01 02:10:18|buy|0.01|audusdpro|0.70594|0.00000|0.70770|2016.02.01 02:45:50|0.70571|0.00|-0.23|{63236579}
15673256|2016.01.29 23:35:49|buy|0.01|usdcadpro|1.39805|0.00000|1.39995|2016.02.01 02:45:51|1.39903|-0.01|0.70|{63227425}
15673367|2016.01.29 23:50:13|buy|0.01|usdcadpro|1.39739|0.00000|1.39923|2016.02.01 02:45:51|1.39903|-0.01|1.17|{63227731}
15673051|2016.01.29 23:15:23|buy|0.01|usdcadpro|1.40005|0.00000|1.39960|2016.02.01 02:45:52|1.39903|-0.01|-0.73|{63226877}
15672238|2016.01.29 21:40:20|buy|0.01|eurgbppro|0.76072|0.00000|0.76196|2016.02.01 02:45:53|0.76079|-0.04|0.10|{63223286}
15672234|2016.01.29 21:40:18|buy|0.01|eurgbppro|0.76072|0.00000|0.76196|2016.02.01 02:45:53|0.76079|-0.04|0.10|{63223289}
15670913|2016.01.29 20:40:31|buy|0.01|eurgbppro|0.76154|0.00000|0.76162|2016.02.01 02:45:54|0.76079|-0.04|-1.06|{63220507}
15670723|2016.01.29 20:30:18|buy|0.01|eurusdpro|1.08345|0.00000|1.08423|2016.02.01 02:45:54|1.08366|-0.04|0.21|{63219632}
15654250|2016.01.29 15:46:51|buy|0.01|eurusdpro|1.08742|0.00000|1.08480|2016.02.01 02:45:55|1.08367|-0.04|-3.75|{63178001}
15673212|2016.01.29 23:35:11|buy|0.01|usdcadpro|1.39816|0.00000|1.39960|2016.02.01 02:45:55|1.39899|-0.01|0.59|{63227416}
15654238|2016.01.29 15:46:44|buy|0.01|eurusdpro|1.08737|0.00000|1.08483|2016.02.01 02:45:56|1.08367|-0.04|-3.70|{63178002}
15673249|2016.01.29 23:35:32|buy|0.01|usdcadpro|1.39798|0.00000|1.39960|2016.02.01 02:45:58|1.39897|-0.01|0.71|{63227411}`
    .split('\n').map(line => line.split('|'));

const TERMINAL_TABS = ['交易', '展示', '账户历史', '新闻', '警报', '邮箱', '市场', '代码库', 'EA', '日志'];

/* ---------- parts ---------- */

const Tool = ({ icon, label, on, menu, text }) => (
    <ToolButton $on={on} type="button" aria-label={label} aria-pressed={on}>
        {icons[icon]}
        {text}
        {menu && <Caret />}
    </ToolButton>
);

const Tabs = ({ items, initial, height, pad, loose, badges = {} }) => {
    const [active, setActive] = useState(initial);
    return (
        <TabStrip $height={height} $pad={pad} role="tablist">
            {items.map((name, i) => (
                <Tab
                    key={name}
                    type="button"
                    role="tab"
                    aria-selected={i === active}
                    $active={i === active}
                    $beforeActive={i + 1 === active}
                    $loose={loose}
                    onClick={() => setActive(i)}
                >
                    {name}
                    {badges[name] && <sub>{badges[name]}</sub>}
                </Tab>
            ))}
        </TabStrip>
    );
};

const Title = () => (
    <TitleBar>
        <Icon size={16}>
            <circle cx="8" cy="8" r="7.500" fill="#9cc31c" stroke="#7c9e12" />
            <path d="M8 2.500l4.500 4L9.500 12h-3L3.500 6.500z" fill="#fff8c8" />
            <path d="M6.500 13h3" stroke="#fff" strokeWidth="2" />
        </Icon>
        <TitleText>134844: ThinkForexAU-Live 2 - [EURGBP,Daily]</TitleText>
        <WindowButtons>
            <WindowButton type="button" aria-label="最小化">
                <svg width="12" height="5"><rect x=".5" y=".5" width="11" height="4" fill="#fff" stroke="#4b5663" /></svg>
            </WindowButton>
            <WindowButton type="button" aria-label="还原">
                <svg width="12" height="10"><path d="M.5.5h11v9H.5zM4 3.500h4v3H4z" fill="#fff" fillRule="evenodd" stroke="#4b5663" /></svg>
            </WindowButton>
            <WindowButton $close type="button" aria-label="关闭">
                <svg width="12" height="10"><path d="M2 1l8 8M10 1L2 9" stroke="#6b2a22" strokeWidth="4" /><path d="M2 1l8 8M10 1L2 9" stroke="#fff" strokeWidth="2.500" /></svg>
            </WindowButton>
        </WindowButtons>
    </TitleBar>
);

const Menu = () => (
    <MenuBar>
        <Icon size={14}>
            <rect x="1" y="1" width="10" height="9" fill="#e3f1fb" stroke="#5b9bc8" />
            <rect x="4" y="5" width="11" height="10" fill="#f2f9ff" stroke="#5b9bc8" />
            <path d="M5.500 12l2-4 2 4 2-4 2 4" stroke="#4a88b8" />
        </Icon>
        <MenuItems>
            {MENUS.map(m => <button key={m} type="button">{m}</button>)}
        </MenuItems>
        <MdiButtons>
            <MdiButton type="button" aria-label="最小化图表"><svg width="8" height="8"><path d="M1 6.500h6" stroke="#5d7285" strokeWidth="2" /></svg></MdiButton>
            <MdiButton type="button" aria-label="还原图表">
                <svg width="9" height="9"><path d="M3.500 3V1h5v4h-2M1 4.500h5v4H1z" fill="none" stroke="#5d7285" strokeWidth="1.500" /></svg>
            </MdiButton>
            <MdiButton type="button" aria-label="关闭图表"><Cross color="#5d7285" /></MdiButton>
        </MdiButtons>
    </MenuBar>
);

const Toolbars = () => (
    <>
        <ToolRow $height={28}>
            <ToolGroup>
                <Grip />
                <Tool icon="newChart" label="新图表" menu />
                <Tool icon="profiles" label="配置文件" menu />
                <ToolSep />
                <Tool icon="market" label="市场报价" on />
                <Tool icon="target" label="数据窗口" />
                <Tool icon="navigator" label="导航" on />
                <Tool icon="terminal" label="终端" on />
                <Tool icon="tester" label="策略测试" />
                <ToolSep />
                <Tool icon="order" text="新订单" />
                <Tool icon="book" label="编辑器" />
                <Tool icon="expert" text="自动交易" />
            </ToolGroup>
            <ToolGroup>
                <Grip />
                <Tool icon="bars" label="柱状图" />
                <Tool icon="candles" label="阴阳烛" on />
                <Tool icon="line" label="折线图" />
                <ToolSep />
                <Tool icon="zoomIn" label="放大" />
                <Tool icon="zoomOut" label="缩小" />
                <Tool icon="tile" label="平铺窗口" />
                <ToolSep />
                <Tool icon="scroll" label="自动滚动" on />
                <Tool icon="shift" label="图表平移" />
                <ToolSep />
                <Tool icon="indicators" label="技术指标" menu />
                <Tool icon="clock" label="时间周期" menu />
                <Tool icon="template" label="模板" menu />
            </ToolGroup>
            <ToolGroup>
                <Grip />
                {TIMEFRAMES.map(t => <TimeButton key={t} type="button" $on={t === 'D1'}>{t}</TimeButton>)}
            </ToolGroup>
            <SearchArea>
                <SearchBox>
                    <input type="text" aria-label="搜索" />
                    <svg width="15" height="15" viewBox="0 0 15 15" fill="none" aria-hidden="true">
                        <circle cx="9" cy="5.500" r="4.500" stroke="#4a6fc0" strokeWidth="1.500" />
                        <path d="M6 9l-5 5" stroke="#3a5fb8" strokeWidth="2.500" />
                    </svg>
                </SearchBox>
                <MessageButton type="button" aria-label="消息">
                    <svg width="17" height="17" aria-hidden="true">
                        <path d="M1 1h15v12H7l-1 3-2-3H1z" fill="#5a78b4" />
                        <text x="8" y="11" textAnchor="middle" fontSize="11" fontWeight="700" fill="#fff">5</text>
                    </svg>
                </MessageButton>
            </SearchArea>
        </ToolRow>
        <ToolRow $height={25}>
            <ToolGroup $last>
                <Grip />
                <Tool icon="cursor" label="光标" on />
                <Tool icon="cross" label="十字准线" />
                <ToolSep />
                <Tool icon="vline" label="垂直线" />
                <Tool icon="hline" label="水平线" />
                <Tool icon="trend" label="趋势线" />
                <Tool icon="channel" label="等距通道" />
                <Tool icon="fibo" label="斐波纳契" />
                <ToolButton type="button" aria-label="文字">
                    <svg width="16" height="16" aria-hidden="true"><text x="8" y="12" textAnchor="middle" fontSize="11" fontWeight="600" fill="#555">A</text></svg>
                </ToolButton>
                <ToolButton type="button" aria-label="文字标签">
                    <svg width="16" height="16" aria-hidden="true">
                        <rect x="2.500" y="2.500" width="11" height="11" fill="none" stroke="#666" strokeDasharray="1 1" />
                        <text x="8" y="12" textAnchor="middle" fontSize="11" fontWeight="600" fill="#555">T</text>
                    </svg>
                </ToolButton>
                <Tool icon="arrows" label="箭头" menu />
            </ToolGroup>
        </ToolRow>
    </>
);

const NetworkGauge = () => (
    <Gauge>
        <GaugeDial>
            <svg width="60" height="60" fill="none" aria-hidden="true">
                <defs>
                    <linearGradient id="dial" x1="0" y1="0" x2="0" y2="1">
                        <stop offset="0" stopColor="#4fc8d8" />
                        <stop offset="1" stopColor="#a5dc82" />
                    </linearGradient>
                </defs>
                <path d="M30 4.500a25.500 25.500 0 0 1 14 46.500" stroke="url(#dial)" strokeWidth="2" />
            </svg>
            41<small>%</small>
        </GaugeDial>
        <GaugeSpeeds>
            <Speed>
                <svg width="7" height="8" fill="none"><path d="M3.500 8V1M.5 4l3-3 3 3" stroke="#4aa8f0" strokeWidth="1.500" /></svg>
                <span>0<small>K/s</small></span>
            </Speed>
            <Speed>
                <svg width="7" height="8" fill="none"><path d="M3.500 0v7M.5 4l3 3 3-3" stroke="#2fae4c" strokeWidth="1.500" /></svg>
                <span>2.6<small>K/s</small></span>
            </Speed>
        </GaugeSpeeds>
    </Gauge>
);

const MarketWatch = () => (
    <Dock>
        <DockHead>
            <h2>市场报价: 06:01:29</h2>
            <CloseMark type="button" aria-label="关闭市场报价"><Cross /></CloseMark>
        </DockHead>
        <DockBody>
            <QuoteTable>
                <colgroup>
                    <col width="104" />
                    <col width="69" />
                    <col />
                </colgroup>
                <thead>
                    <tr><th>交易品种</th><th>卖价</th><th>买价</th></tr>
                </thead>
                <tbody>
                    {QUOTES.map(([name, bid, ask, up]) => (
                        <tr key={name}>
                            <td><Symbol><Arrow up={up} />{name}</Symbol></td>
                            <td><Price $up={up}>{bid}</Price></td>
                            <td><Price $up={up}>{ask}</Price></td>
                        </tr>
                    ))}
                </tbody>
            </QuoteTable>
            <Scroll>
                <ScrollArrow />
                <Thumb $height={26} $top={7} $grip />
                <ScrollArrow $down />
            </Scroll>
        </DockBody>
        <Tabs items={['交易品种', '即时图']} initial={0} pad={2} />
    </Dock>
);

const Navigator = () => (
    <Dock>
        <DockHead>
            <h2>导航</h2>
            <CloseMark type="button" aria-label="关闭导航"><Cross /></CloseMark>
        </DockHead>
        <DockBody>
            <Tree>
                <TreeRow $pad={9} $level={0}><Expander /><People />账户</TreeRow>
                <TreeRow $pad={30} $level={1}><Expander /><Server />ThinkForexAU-Live</TreeRow>
                {ACCOUNTS.map((a, i) => (
                    <TreeRow key={i} $pad={55} $level={1}><Branch /><Person />{a}</TreeRow>
                ))}
            </Tree>
            <Scroll>
                <ScrollArrow />
                <Thumb $height={102} $top={15} $grip />
                <ScrollArrow $down />
            </Scroll>
        </DockBody>
        <Tabs items={['常用', '收藏夹']} initial={0} pad={2} />
    </Dock>
);

const OrderHistory = () => (
    <OrderArea>
        <OrderTable>
            <colgroup>
                {COLUMNS.map(([, width], i) => <col key={i} width={width || undefined} />)}
            </colgroup>
            <thead>
                <tr>
                    {COLUMNS.map(([name], i) => <th key={i}>{name}{i === 8 && <>&#160;&#160; /&#160;</>}</th>)}
                </tr>
            </thead>
            <tbody>
                {ORDERS.map(([id, ...cells]) => (
                    <tr key={id}>
                        <td><OrderId><Sheet sell={cells[1] === 'sell'} />{id}</OrderId></td>
                        {cells.map((c, i) => <td key={i}>{c}</td>)}
                    </tr>
                ))}
            </tbody>
            <tfoot>
                <tr>
                    <td colSpan={11}>
                        <Totals>
                            <i />
                            <span>盈/亏: 48 935.57</span>
                            <span>信用额: 0.00</span>
                            <span>存款: 100 000.00</span>
                            <span>取款: -36 300.00</span>
                        </Totals>
                    </td>
                    <td>112 635.57</td>
                    <td />
                </tr>
            </tfoot>
        </OrderTable>
        <Scroll $width={18}>
            <ScrollArrow />
            <Thumb $height={15} $top={514} />
            <ScrollArrow $down />
        </Scroll>
    </OrderArea>
);

const Status = () => (
    <StatusBar>
        <HelpText>寻求帮助,请按F1键</HelpText>
        <StatusCell $width={135}>Default</StatusCell>
        <StatusCell $width={117} />
        <StatusCell $width={82} />
        <StatusCell $width={81} />
        <StatusCell $width={78} />
        <StatusCell $width={80} />
        <StatusCell $width={78} />
        <StatusCell $width={149}>
            <svg width="23" height="13" aria-hidden="true">
                {[0, 1, 2, 3, 4, 5, 6, 7].map(i => (
                    <g key={i}>
                        <rect x={i * 3} y="0" width="2" height={9 - i} fill="#6c8a1c" />
                        <rect x={i * 3} y={10 - i} width="2" height={3 + i} fill="#17405c" />
                    </g>
                ))}
            </svg>
            8563/9 kb
        </StatusCell>
        <svg width="16" height="18" aria-hidden="true"><path d="M2 18L16 4M6 18L16 8M10 18l6-6" stroke="#999" /></svg>
        <SiteMark href="#talkforex">www.talkforex.com韬客论坛</SiteMark>
    </StatusBar>
);

const App = () => (
    <Window>
        <GlobalStyle />
        <Title />
        <Client>
            <Menu />
            <Toolbars />
            <Upper>
                <MarketWatch />
                <Navigator />
                <ChartPanel>
                    <PriceChart />
                    <ChartTabs>
                        <Tabs items={CHART_TABS} initial={8} pad={2} loose />
                        <ChartTabArrows>
                            <svg width="5" height="8"><path d="M5 0v8L1 4z" fill="#888" /></svg>
                            <svg width="5" height="8"><path d="M0 0v8l4-4z" fill="#111" /></svg>
                        </ChartTabArrows>
                    </ChartTabs>
                </ChartPanel>
            </Upper>
            <Terminal>
                <TerminalSide>
                    <CloseMark type="button" aria-label="关闭终端"><Cross /></CloseMark>
                    <TerminalLabel>终端</TerminalLabel>
                </TerminalSide>
                <TerminalMain>
                    <OrderHistory />
                    <Tabs items={TERMINAL_TABS} initial={2} badges={{ 新闻: '41' }} pad={2} />
                </TerminalMain>
            </Terminal>
            <Status />
        </Client>
        <NetworkGauge />
    </Window>
);

export default App;
